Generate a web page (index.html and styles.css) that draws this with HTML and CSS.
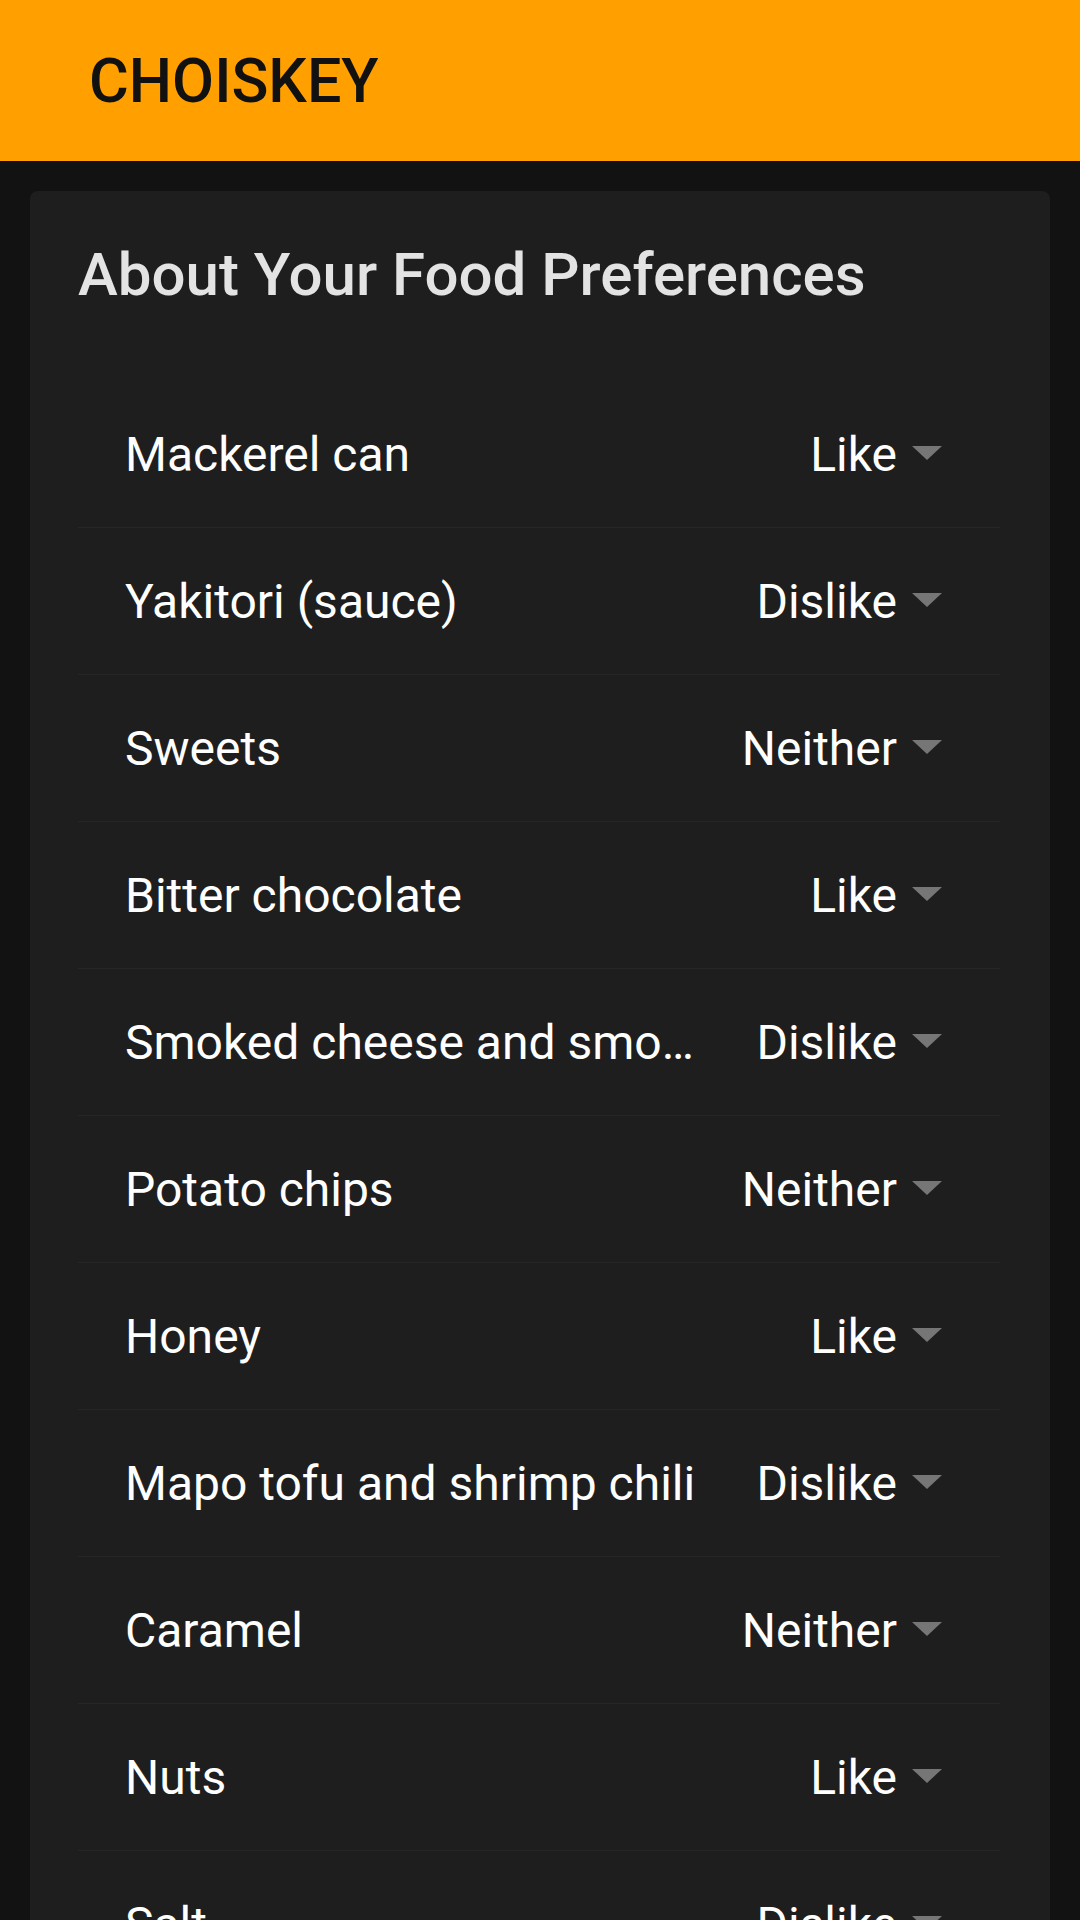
FILE: index.html
```html
<!DOCTYPE html>
<html lang="en">
<head>
<meta charset="UTF-8">
<meta name="viewport" content="width=device-width, initial-scale=1.0">
<title>Choiskey</title>
<link rel="stylesheet" href="styles.css">
</head>
<body>

<header class="app-bar">CHOISKEY</header>

<main class="page">
  <section class="card">
    <h2 class="card-title">About Your Food Preferences</h2>

    <ul class="pref-list">
      <li class="pref-row"><span class="pref-name">Mackerel can</span><span class="pref-value">Like<i class="caret"></i></span></li>
      <li class="pref-row"><span class="pref-name">Yakitori (sauce)</span><span class="pref-value">Dislike<i class="caret"></i></span></li>
      <li class="pref-row"><span class="pref-name">Sweets</span><span class="pref-value">Neither<i class="caret"></i></span></li>
      <li class="pref-row"><span class="pref-name">Bitter chocolate</span><span class="pref-value">Like<i class="caret"></i></span></li>
      <li class="pref-row"><span class="pref-name">Smoked cheese and smoked nuts</span><span class="pref-value">Dislike<i class="caret"></i></span></li>
      <li class="pref-row"><span class="pref-name">Potato chips</span><span class="pref-value">Neither<i class="caret"></i></span></li>
      <li class="pref-row"><span class="pref-name">Honey</span><span class="pref-value">Like<i class="caret"></i></span></li>
      <li class="pref-row"><span class="pref-name">Mapo tofu and shrimp chili</span><span class="pref-value">Dislike<i class="caret"></i></span></li>
      <li class="pref-row"><span class="pref-name">Caramel</span><span class="pref-value">Neither<i class="caret"></i></span></li>
      <li class="pref-row"><span class="pref-name">Nuts</span><span class="pref-value">Like<i class="caret"></i></span></li>
      <li class="pref-row"><span class="pref-name">Salt</span><span class="pref-value">Dislike<i class="caret"></i></span></li>
    </ul>
  </section>
</main>

</body>
</html>
```

FILE: styles.css
```css
html, body {
    margin: 0;
    height: 100%;
    overflow: hidden;
}

body {
    font-family: Roboto, "Noto Sans", Arial, sans-serif;
    background: #121212;
    color: #ffffff;
}

.app-bar {
    height: 161px;
    display: flex;
    align-items: center;
    padding-left: 89px;
    background: #ffa000;
    color: #111111;
    font-size: 61px;
    font-weight: 500;
}

.page {
    padding: 30px 30px 0;
}

.card {
    background: #1e1e1e;
    border-radius: 8px;
    padding: 49px 50px 0 48px;
}

.card-title {
    margin: 0;
    font-size: 60px;
    font-weight: 500;
    line-height: 70px;
    color: #e3e3e3;
}

.pref-list {
    list-style: none;
    margin: 71px 0 0;
    padding: 0;
}

.pref-row {
    height: 146px;
    display: flex;
    align-items: center;
    padding: 0 58px 0 47px;
    border-bottom: 1px solid #262626;
    font-size: 48px;
}

.pref-name {
    flex: 1;
    min-width: 0;
    white-space: nowrap;
    overflow: hidden;
    text-overflow: ellipsis;
}

.pref-value {
    width: 245px;
    display: flex;
    align-items: center;
    justify-content: flex-end;
    gap: 15px;
}

.caret {
    width: 0;
    height: 0;
    border-left: 15px solid transparent;
    border-right: 15px solid transparent;
    border-top: 14px solid #767676;
    margin-top: -2px;
}
```
